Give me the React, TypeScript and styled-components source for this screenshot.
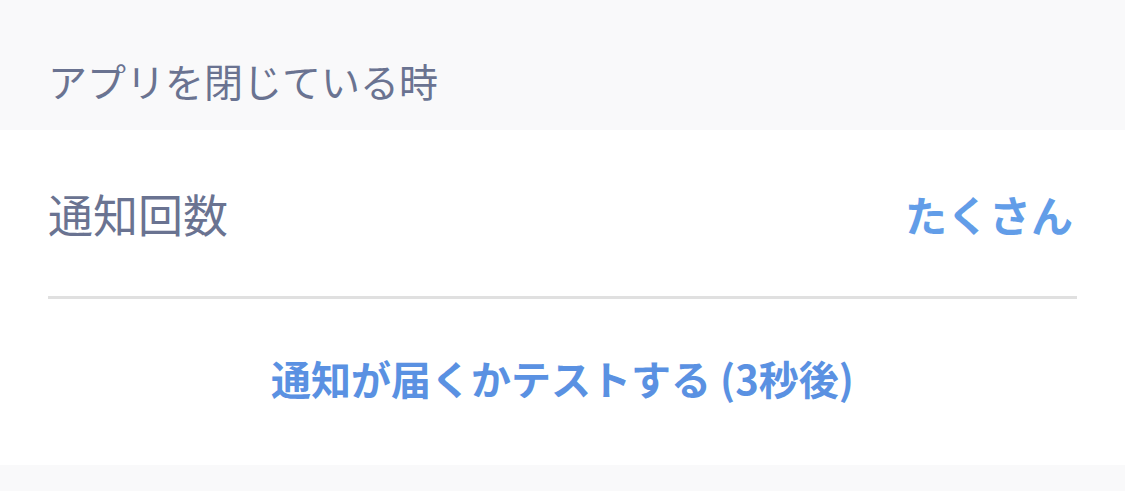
import React from 'react';
import styled, { createGlobalStyle } from 'styled-components';

const GlobalStyle = createGlobalStyle`
  html, body {
    margin: 0;
    padding: 0;
    background: #f9f9fa;
  }
  body {
    font-family: "Noto Sans CJK JP", "Noto Sans", sans-serif;
  }
`;

const App = () => {
  return (
    <Page>
      <GlobalStyle />
      <SectionHeader>アプリを閉じている時</SectionHeader>
      <Section>
        <Row>
          <Label>通知回数</Label>
          <Value>たくさん</Value>
        </Row>
        <Divider />
        <ActionButton>通知が届くかテストする (3秒後)</ActionButton>
      </Section>
    </Page>
  );
};

const Page = styled.div`
  width: 1125px;
  height: 491px;
  background: #f9f9fa;
  display: flex;
  flex-direction: column;
`;

const SectionHeader = styled.div`
  height: 130px;
  box-sizing: border-box;
  padding: 54px 48px 0;
  font-size: 39px;
  line-height: 52px;
  color: #6a7391;
`;

const Section = styled.div`
  background: #ffffff;
  height: 335px;
  display: flex;
  flex-direction: column;
`;

const Row = styled.div`
  height: 166px;
  display: flex;
  align-items: center;
  justify-content: space-between;
  padding: 0 52px 0 48px;
`;

const Label = styled.span`
  font-size: 45px;
  color: #6a7391;
`;

const Value = styled.span`
  font-size: 42px;
  font-weight: 700;
  color: #629de8;
`;

const Divider = styled.div`
  height: 3px;
  margin: 0 48px;
  background: #e0e0e0;
`;

const ActionButton = styled.button`
  flex: 1;
  border: none;
  background: transparent;
  padding: 0 0 8px;
  font-family: inherit;
  font-size: 40px;
  font-weight: 700;
  color: #5a91e2;
  cursor: pointer;
`;

export default App;
